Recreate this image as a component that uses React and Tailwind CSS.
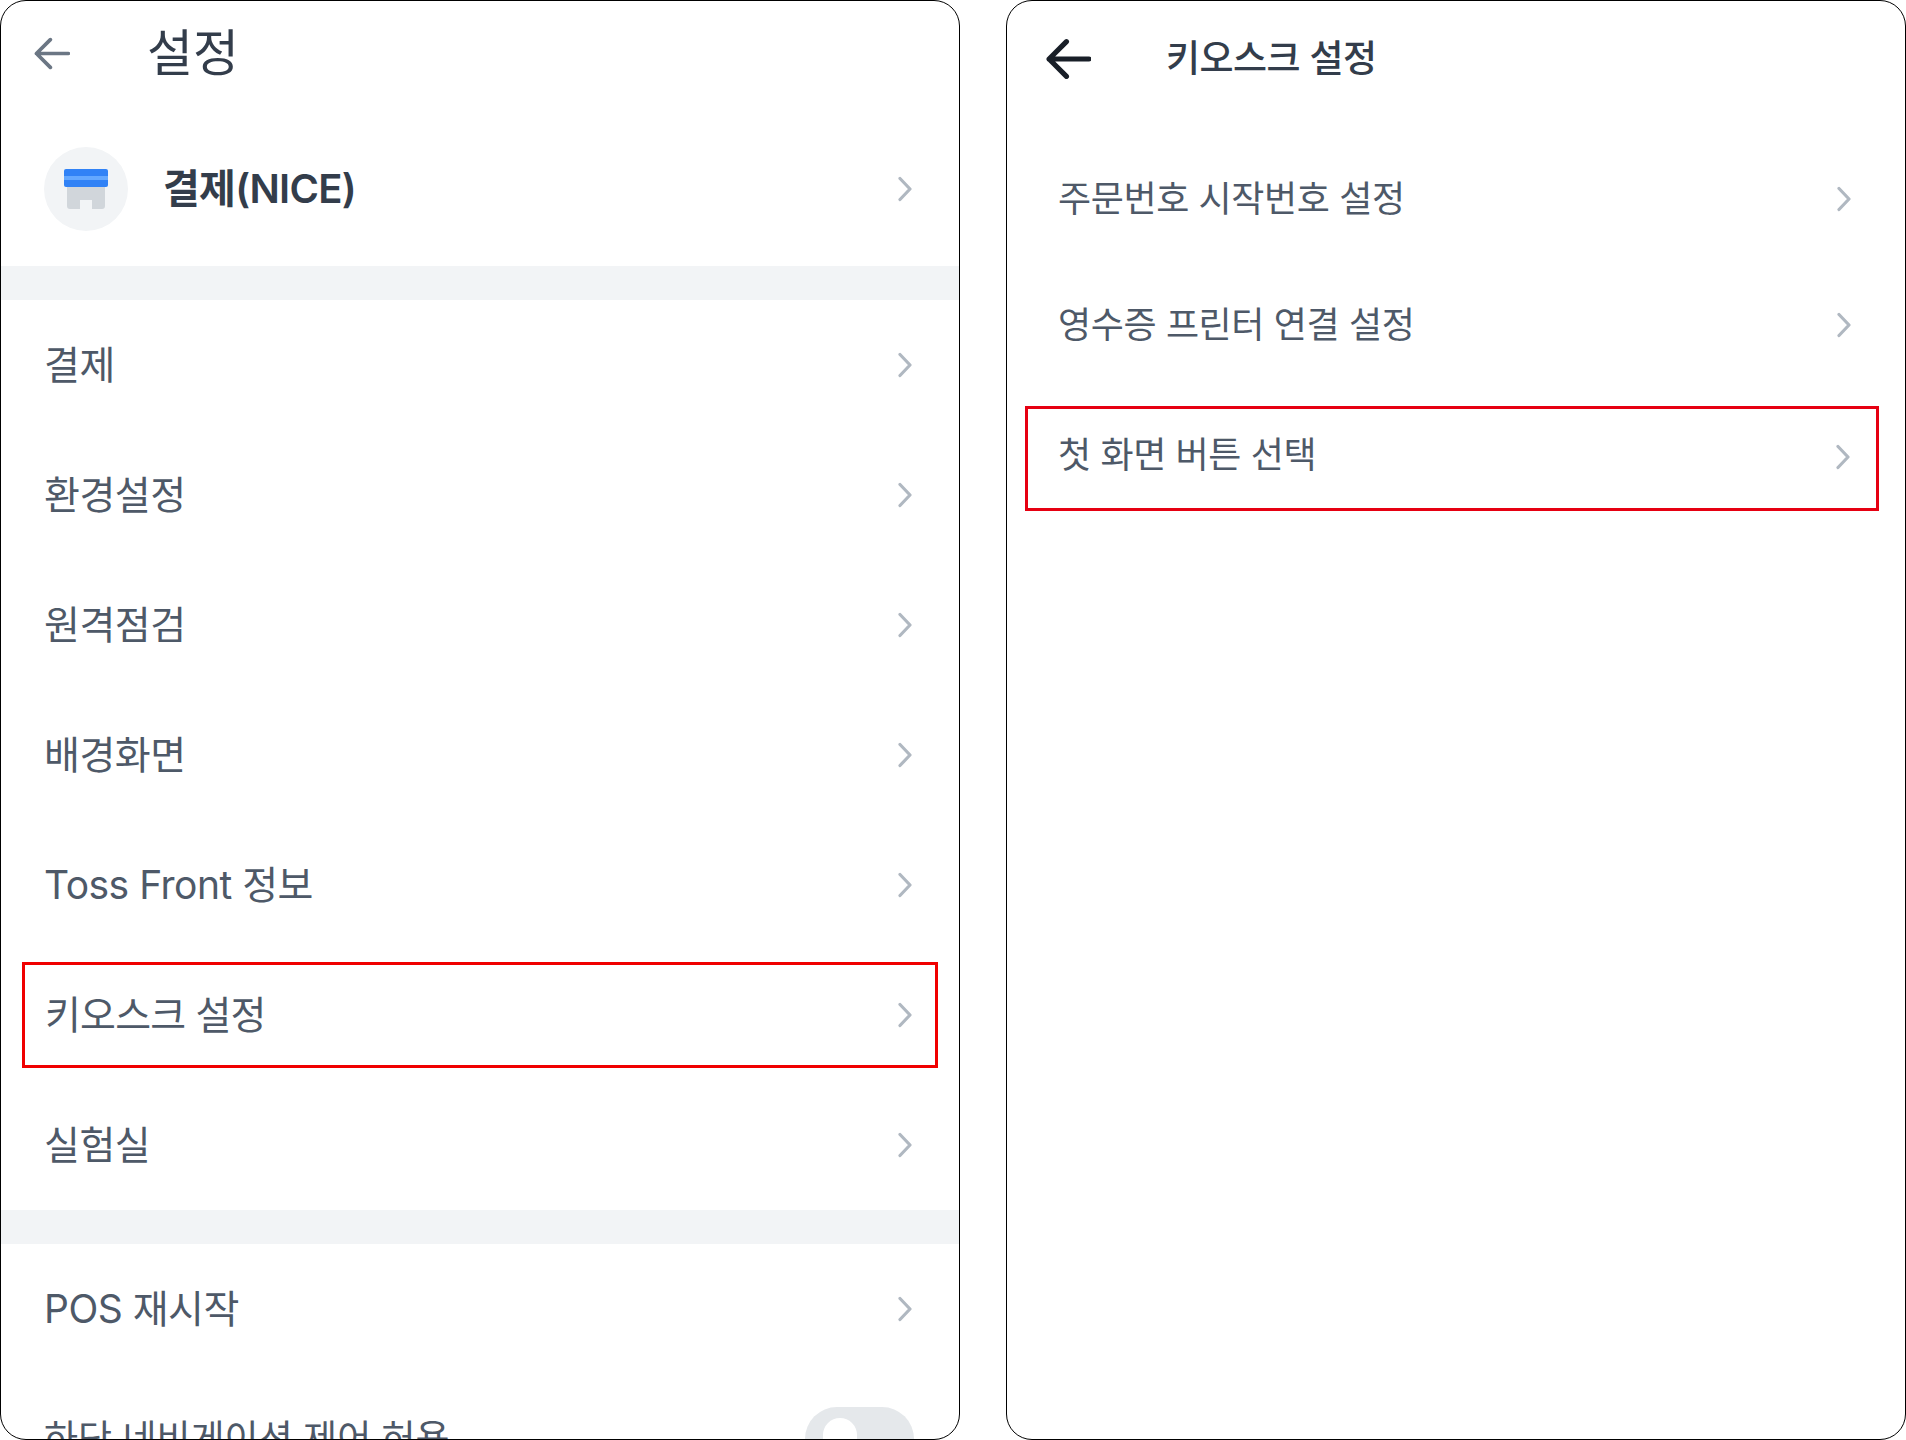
import React from 'react';

const font = { fontFamily: 'Inter, "Noto Sans CJK KR", "Noto Sans", sans-serif' };

const Chevron = ({ className = '' }) => (
  <svg viewBox="0 0 14 26" className={`w-[14px] h-[26px] shrink-0 ${className}`} fill="none" stroke="#b0b8c1" strokeWidth="3.2" strokeLinecap="round" strokeLinejoin="round">
    <path d="M2 2.5 L12 13 L2 23.5" />
  </svg>
);

const BackArrow = ({ color, width, className }) => (
  <svg viewBox="0 0 44 40" className={className} fill="none" stroke={color} strokeWidth={width} strokeLinecap="round" strokeLinejoin="round">
    <path d="M42 20 H3 M20 3 L3 20 L20 37" />
  </svg>
);

const StoreIcon = () => (
  <svg viewBox="0 0 44 40" className="w-[44px] h-[40px]">
    <path d="M3 17 H41 V37 Q41 40 38 40 H28 V31 H16 V40 H6 Q3 40 3 37 Z" fill="#d1d6db" />
    <rect x="0" y="0" width="44" height="18" rx="2" fill="#3182f6" />
    <rect x="0" y="7" width="44" height="4" fill="#64a8ff" />
  </svg>
);

const Row = ({ label }) => (
  <div className="h-[130px] pl-[43px] pr-[47px] flex items-center justify-between">
    <span className="text-[39px] text-[#4e5968] tracking-[-0.5px]">{label}</span>
    <Chevron />
  </div>
);

const Band = () => <div className="h-[34px] bg-[#f2f4f6]" />;

const leftRows = ['결제', '환경설정', '원격점검', '배경화면', 'Toss Front 정보'];

export default function App() {
  return (
    <div className="w-[1906px] h-[1440px] flex justify-between bg-white" style={font}>
      {/* left phone */}
      <section className="w-[960px] h-[1440px] border border-black rounded-[26px] overflow-hidden">
        <header className="h-[104px] flex items-center pl-[33px]">
          <BackArrow color="#6b7684" width="4.5" className="w-[36px] h-[33px]" />
          <h1 className="ml-[77px] text-[50px] font-normal text-[#333d4b]">설정</h1>
        </header>
        <div className="h-[161px] pt-[7px] pl-[43px] pr-[47px] flex items-center justify-between">
          <div className="flex items-center">
            <div className="w-[84px] h-[84px] rounded-full bg-[#f2f4f6] flex items-center justify-center">
              <StoreIcon />
            </div>
            <span className="ml-[35px] text-[40px] font-semibold text-[#333d4b] tracking-[-0.7px]">결제(NICE)</span>
          </div>
          <Chevron />
        </div>
        <Band />
        {leftRows.map((label) => <Row key={label} label={label} />)}
        <div className="h-[130px] flex items-center">
          <div className="w-[918px] h-[106px] mx-[21px] pl-[20px] pr-[23px] border-[3px] border-[#f00000] flex items-center justify-between">
            <span className="text-[39px] text-[#4e5968] tracking-[-0.8px]">키오스크 설정</span>
            <Chevron />
          </div>
        </div>
        <Row label="실험실" />
        <Band />
        <Row label="POS 재시작" />
        <div className="h-[130px] pl-[43px] pr-[45px] flex items-center justify-between">
          <span className="text-[37px] text-[#4e5968]">하단 네비게이션 제어 허용</span>
          <div className="w-[109px] h-[64px] rounded-full bg-[#e5e8eb] flex items-center pl-[18px]">
            <div className="w-[34px] h-[42px] rounded-full bg-white" />
          </div>
        </div>
      </section>

      {/* right phone */}
      <section className="w-[900px] h-[1440px] border border-black rounded-[26px] overflow-hidden">
        <header className="h-[116px] flex items-center pl-[39px]">
          <BackArrow color="#191f28" width="5" className="w-[45px] h-[42px]" />
          <h1 className="ml-[75px] text-[37px] font-medium text-[#333d4b] tracking-[-0.5px]">키오스크 설정</h1>
        </header>
        <div className="pt-[19px]">
          {['주문번호 시작번호 설정', '영수증 프린터 연결 설정'].map((label) => (
            <div key={label} className="h-[126px] pl-[51px] pr-[54px] flex items-center justify-between">
              <span className="text-[36px] text-[#4e5968] tracking-[-0.4px]">{label}</span>
              <Chevron />
            </div>
          ))}
          <div className="mt-[18px] ml-[18px] w-[854px] h-[105px] pl-[30px] pr-[26px] pb-[4px] border-[3px] border-[#e60012] flex items-center justify-between">
            <span className="pb-[3px] text-[36px] text-[#4e5968] tracking-[-0.4px]">첫 화면 버튼 선택</span>
            <Chevron />
          </div>
        </div>
      </section>
    </div>
  );
}
